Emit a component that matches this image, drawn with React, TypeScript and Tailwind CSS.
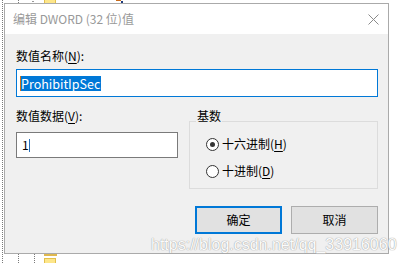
import React from "react";

type RadioProps = {
  checked?: boolean;
  label: string;
  hotkey: string;
};

function Radio({ checked, label, hotkey }: RadioProps) {
  return (
    <div className="flex h-[20px] items-center gap-[3px] pl-[16px]">
      <div className="flex h-[13px] w-[13px] items-center justify-center rounded-full border border-[#333333] bg-white">
        {checked && <div className="h-[5px] w-[5px] rounded-full bg-[#333333]"></div>}
      </div>
      <span className="leading-[16px]">
        {label}(<span className="underline underline-offset-2">{hotkey}</span>)
      </span>
    </div>
  );
}

export default function App() {
  return (
    <div className="relative h-[263px] w-[404px] overflow-hidden bg-white font-['Noto_Sans_CJK_SC',sans-serif] text-[12px] text-black">
      {/* registry tree peeking out behind the dialog */}
      <div className="absolute left-[2px] top-0 h-full border-l border-dotted border-[#7a7a7a]"></div>
      <div className="absolute left-[18px] top-0 h-[3px] border-l border-dotted border-[#7a7a7a]"></div>
      <div className="absolute left-[32px] top-[1px] h-[1px] w-[2px] bg-[#9a9a9a]"></div>
      <div className="absolute left-[44px] top-0 h-[3px] w-[12px] border-x border-[#e3c04c] bg-[#fde68a]"></div>
      <div className="absolute left-[116px] top-0 h-[3px] w-[8px]">
        <div className="h-[1px] w-[5px] bg-[#c86a1a]"></div>
        <div className="ml-[5px] h-[2px] w-[2px] bg-[#1f3a7a]"></div>
      </div>
      <div className="absolute left-[18px] top-[254px] h-[9px] border-l border-dotted border-[#7a7a7a]"></div>
      <div className="absolute left-[34px] top-[254px] h-[9px] border-l border-dotted border-[#7a7a7a]"></div>
      <div className="absolute left-[44px] top-[254px] h-[2px] w-[13px] bg-[#dfb84f]"></div>
      <div className="absolute left-[44px] top-[258px] h-[6px] w-[12px] border border-[#e3c04c] bg-[#fde68a]"></div>

      {/* dialog window */}
      <div className="absolute left-[4px] top-[3px] flex h-[251px] w-[385px] flex-col border border-[#aaaaaa] bg-[#f0f0f0]">
        <div className="flex h-[30px] items-center justify-between bg-white pl-[8px] pr-[9px]">
          <span className="leading-[16px] text-[#999999]">编辑 DWORD (32 位)值</span>
          <svg width="11" height="11" viewBox="0 0 11 11">
            <path d="M0.5 0.5 L10.5 10.5 M10.5 0.5 L0.5 10.5" stroke="#8a8a8a" strokeWidth="1" fill="none" />
          </svg>
        </div>

        <div className="flex flex-1 flex-col pl-[11px] pr-[10px] pt-[14px]">
          <div className="h-[16px] leading-[16px]">
            数值名称(<span className="underline underline-offset-2">N</span>):
          </div>
          <div className="mt-[5px] flex h-[28px] items-center border border-[#0078d7] bg-white pl-[3px]">
            <span className="h-[15px] border-l border-[#d0701a] bg-[#0078d7] pr-[1px] text-[12.5px] leading-[15px] text-white">
              ProhibitIpSec
            </span>
          </div>

          <div className="mt-[11px] flex items-start gap-[11px]">
            <div className="flex w-[162px] flex-col">
              <div className="h-[16px] leading-[16px]">
                数值数据(<span className="underline underline-offset-2">V</span>):
              </div>
              <div className="mt-[8px] flex h-[26px] items-center border border-[#7a7a7a] bg-white pl-[5px]">
                <span className="leading-[16px]">1</span>
                <span className="h-[13px] w-[1px] bg-[#2a6fb8]"></span>
              </div>
            </div>

            <fieldset className="w-[189px] border border-[#dcdcdc] pb-[7px]">
              <legend className="ml-[6px] px-[1px] pb-[10px] leading-[16px]">基数</legend>
              <Radio checked label="十六进制" hotkey="H" />
              <div className="mt-[7px]">
                <Radio label="十进制" hotkey="D" />
              </div>
            </fieldset>
          </div>

          <div className="mt-[17px] flex justify-end gap-[9px]">
            <button className="flex h-[28px] w-[87px] items-center justify-center border-2 border-[#0078d7] bg-[#e1e1e1] leading-[16px]">
              确定
            </button>
            <button className="flex h-[28px] w-[87px] items-center justify-center border border-[#adadad] bg-[#e1e1e1] leading-[16px]">
              取消
            </button>
          </div>
        </div>
      </div>

      {/* blog watermark */}
      <div className="pointer-events-none absolute left-[151px] top-[236px] whitespace-nowrap font-['Liberation_Sans',Arial,sans-serif] text-[16px] leading-[18px] text-[#fbfbfb] [text-shadow:0_0_1px_#9a9a9a,0_0_1px_#b4b4b4]">
        https://blog.csdn.net/qq_33916060
      </div>
    </div>
  );
}
